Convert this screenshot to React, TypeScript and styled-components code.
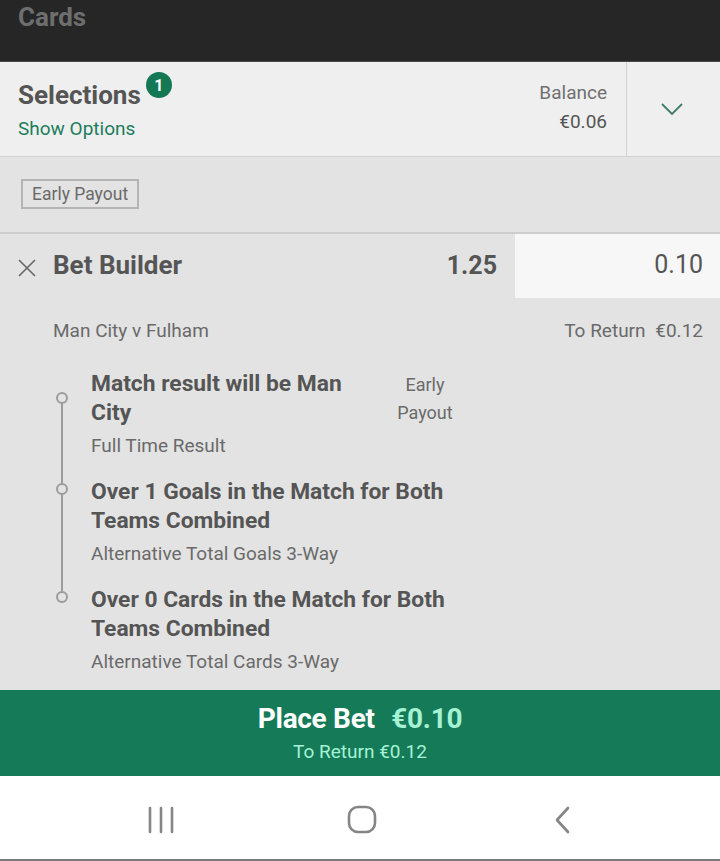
import React from 'react';
import styled, { createGlobalStyle } from 'styled-components';

const GlobalStyle = createGlobalStyle`
  html, body {
    margin: 0;
    padding: 0;
    background: #e3e3e3;
  }
  body {
    font-family: Roboto, 'Liberation Sans', Arial, sans-serif;
    color: #555;
  }
`;

const legs = [
  {
    title: 'Match result will be Man City',
    market: 'Full Time Result',
    side: 'Early Payout',
  },
  {
    title: 'Over 1 Goals in the Match for Both Teams Combined',
    market: 'Alternative Total Goals 3-Way',
  },
  {
    title: 'Over 0 Cards in the Match for Both Teams Combined',
    market: 'Alternative Total Cards 3-Way',
  },
];

const App = () => (
  <Screen>
    <GlobalStyle />
    <TopBar>
      <TopTitle>Cards</TopTitle>
    </TopBar>

    <Header>
      <HeaderMain>
        <TitleRow>
          <Heading>Selections</Heading>
          <Badge>1</Badge>
        </TitleRow>
        <GreenLink>Show Options</GreenLink>
      </HeaderMain>
      <Balance>
        <BalanceLabel>Balance</BalanceLabel>
        <BalanceValue>€0.06</BalanceValue>
      </Balance>
      <ChevronCell>
        <svg width="22" height="12" viewBox="0 0 22 12" fill="none">
          <path d="M1 1l10 10L21 1" stroke="#3f7b66" strokeWidth="1.8" />
        </svg>
      </ChevronCell>
    </Header>

    <TagBar>
      <Tag>Early Payout</Tag>
    </TagBar>

    <BetRow>
      <CloseBtn>
        <svg width="20" height="20" viewBox="0 0 20 20" fill="none">
          <path d="M2 2l16 16M18 2L2 18" stroke="#666" strokeWidth="1.6" />
        </svg>
      </CloseBtn>
      <BetName>Bet Builder</BetName>
      <Odds>1.25</Odds>
      <Stake>0.10</Stake>
    </BetRow>

    <EventRow>
      <EventName>Man City v Fulham</EventName>
      <ToReturn>
        To Return <span>€0.12</span>
      </ToReturn>
    </EventRow>

    <Legs>
      {legs.map((leg, i) => (
        <Leg key={i}>
          <Marker first={i === 0} last={i === legs.length - 1}>
            <Dot />
          </Marker>
          <LegBody>
            <LegTitle narrow={!!leg.side}>{leg.title}</LegTitle>
            <LegMarket>{leg.market}</LegMarket>
          </LegBody>
          {leg.side && <LegSide>{leg.side}</LegSide>}
        </Leg>
      ))}
    </Legs>

    <PlaceBet>
      <PlaceLine>
        Place Bet <PlaceAmount>€0.10</PlaceAmount>
      </PlaceLine>
      <PlaceReturn>To Return €0.12</PlaceReturn>
    </PlaceBet>

    <NavBar>
      <NavCell>
        <svg width="30" height="28" viewBox="0 0 30 28" fill="none">
          <path d="M4 2v24M15 2v24M26 2v24" stroke="#858585" strokeWidth="2.6" strokeLinecap="round" />
        </svg>
      </NavCell>
      <NavCell>
        <svg width="30" height="30" viewBox="0 0 30 30" fill="none">
          <rect x="2" y="2" width="26" height="25" rx="9" stroke="#858585" strokeWidth="2.6" />
        </svg>
      </NavCell>
      <NavCell>
        <svg width="18" height="30" viewBox="0 0 18 30" fill="none">
          <path d="M14 3L3 15l11 12" stroke="#858585" strokeWidth="2.6" strokeLinecap="round" strokeLinejoin="round" />
        </svg>
      </NavCell>
    </NavBar>
  </Screen>
);

const Screen = styled.div`
  width: 720px;
  height: 861px;
  display: flex;
  flex-direction: column;
  background: #e3e3e3;
  overflow: hidden;
`;

const TopBar = styled.div`
  height: 62px;
  flex-shrink: 0;
  background: #262626;
  border-bottom: 1px solid #4a4a4a;
  padding: 0 18px;
  box-sizing: border-box;
`;

const TopTitle = styled.div`
  font-size: 26px;
  font-weight: 700;
  color: #6e6e6e;
  line-height: 34px;
`;

const Header = styled.div`
  height: 95px;
  flex-shrink: 0;
  background: #efefef;
  border-bottom: 1px solid #d2d2d2;
  display: flex;
  box-sizing: border-box;
`;

const HeaderMain = styled.div`
  flex: 1;
  padding: 9px 18px 0;
`;

const TitleRow = styled.div`
  display: flex;
  align-items: flex-start;
  gap: 5px;
`;

const Heading = styled.div`
  font-size: 26px;
  font-weight: 700;
  color: #555;
  line-height: 46px;
  margin-top: 1px;
`;

const Badge = styled.div`
  width: 26px;
  height: 26px;
  border-radius: 50%;
  background: #147854;
  color: #fff;
  font-size: 16px;
  font-weight: 700;
  display: flex;
  align-items: center;
  justify-content: center;
  margin-top: 1px;
`;

const GreenLink = styled.div`
  font-size: 19px;
  color: #1d7d5c;
  line-height: 22px;
`;

const Balance = styled.div`
  display: flex;
  flex-direction: column;
  align-items: flex-end;
  justify-content: center;
  padding: 0 19px 5px 0;
  border-right: 1px solid #d2d2d2;
  gap: 6px;
`;

const BalanceLabel = styled.div`
  font-size: 19px;
  color: #707070;
`;

const BalanceValue = styled.div`
  font-size: 19px;
  color: #555;
`;

const ChevronCell = styled.div`
  width: 93px;
  display: flex;
  align-items: center;
  justify-content: center;
  padding-right: 4px;
  box-sizing: border-box;
`;

const TagBar = styled.div`
  height: 77px;
  flex-shrink: 0;
  padding: 22px 21px 0;
  box-sizing: border-box;
  border-bottom: 2px solid #cdcdcd;
`;

const Tag = styled.div`
  display: inline-block;
  height: 30px;
  box-sizing: border-box;
  padding: 0 9px;
  border: 2px solid #b4b4b4;
  font-size: 17.5px;
  line-height: 26px;
  color: #6a6a6a;
`;

const BetRow = styled.div`
  height: 64px;
  flex-shrink: 0;
  display: flex;
  align-items: center;
`;

const CloseBtn = styled.div`
  width: 53px;
  display: flex;
  justify-content: center;
  padding-top: 4px;
`;

const BetName = styled.div`
  flex: 1;
  font-size: 26px;
  font-weight: 700;
  color: #555;
  margin-top: -2px;
`;

const Odds = styled.div`
  font-size: 25px;
  font-weight: 700;
  color: #555;
  padding-right: 18px;
  margin-top: -2px;
`;

const Stake = styled.div`
  width: 205px;
  height: 100%;
  background: #f7f7f7;
  box-sizing: border-box;
  padding: 0 17px 3px 0;
  display: flex;
  align-items: center;
  justify-content: flex-end;
  font-size: 25px;
  color: #555;
`;

const EventRow = styled.div`
  display: flex;
  justify-content: space-between;
  align-items: center;
  padding: 8px 17px 0 53px;
  height: 57px;
  flex-shrink: 0;
  box-sizing: border-box;
`;

const EventName = styled.div`
  font-size: 19px;
  color: #6a6a6a;
`;

const ToReturn = styled.div`
  font-size: 19px;
  color: #6a6a6a;
  span {
    margin-left: 5px;
  }
`;

const Legs = styled.div`
  flex: 1;
  min-height: 0;
  overflow: hidden;
  padding: 14px 0 0 53px;
  display: flex;
  flex-direction: column;
`;

const Leg = styled.div`
  display: flex;
  padding-bottom: 19px;

  &:last-child {
    padding-bottom: 0;
  }
`;

const Marker = styled.div<{ first?: boolean; last?: boolean }>`
  width: 38px;
  flex-shrink: 0;
  position: relative;
  padding-top: ${(p) => (p.first ? '23px' : '6px')};

  &::after {
    content: '';
    position: absolute;
    left: 8px;
    width: 2px;
    background: #9c9c9c;
    top: ${(p) => (p.first ? '34px' : '0')};
    bottom: ${(p) => (p.last ? 'auto' : '-19px')};
    height: ${(p) => (p.last ? '10px' : 'auto')};
  }
`;

const Dot = styled.div`
  width: 12px;
  height: 12px;
  box-sizing: border-box;
  border: 2px solid #9c9c9c;
  border-radius: 50%;
  background: #e3e3e3;
  margin-left: 3px;
  position: relative;
  z-index: 1;
`;

const LegBody = styled.div`
  display: flex;
  flex-direction: column;
`;

const LegTitle = styled.div<{ narrow?: boolean }>`
  font-size: 22.8px;
  font-weight: 700;
  line-height: 29px;
  color: #555;
  width: ${(p) => (p.narrow ? '292px' : '400px')};
`;

const LegMarket = styled.div`
  font-size: 19px;
  color: #6a6a6a;
  line-height: 24px;
  margin-top: 7px;
`;

const LegSide = styled.div`
  width: 72px;
  text-align: center;
  font-size: 18px;
  line-height: 28px;
  color: #6a6a6a;
  padding-top: 2px;
  margin-left: 6px;
`;

const PlaceBet = styled.div`
  height: 86px;
  flex-shrink: 0;
  background: #157a58;
  display: flex;
  flex-direction: column;
  align-items: center;
  justify-content: center;
  gap: 6px;
`;

const PlaceLine = styled.div`
  font-size: 28px;
  font-weight: 700;
  color: #fff;
  letter-spacing: -0.3px;
  line-height: 32px;
`;

const PlaceAmount = styled.span`
  color: #a6f2d4;
  margin-left: 10px;
`;

const PlaceReturn = styled.div`
  font-size: 19px;
  color: #a6f2d4;
  line-height: 22px;
`;

const NavBar = styled.div`
  height: 85px;
  flex-shrink: 0;
  background: #fff;
  border-bottom: 2px solid #7a7a7a;
  display: grid;
  grid-template-columns: repeat(3, 201px);
  justify-content: center;
  align-items: center;
  padding: 4px 0 0 4px;
  box-sizing: border-box;
`;

const NavCell = styled.div`
  display: flex;
  justify-content: center;
  align-items: center;
`;

export default App;
